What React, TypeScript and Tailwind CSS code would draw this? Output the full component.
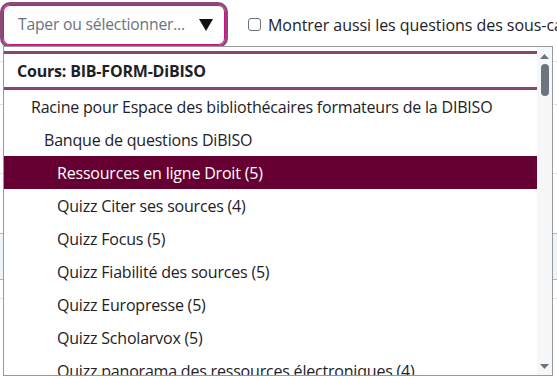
import React from 'react';

const rows = [
  { label: 'Racine pour Espace des bibliothécaires formateurs de la DIBISO', indent: 'pl-[27px]' },
  { label: 'Banque de questions DiBISO', indent: 'pl-[40px]' },
  { label: 'Ressources en ligne Droit (5)', indent: 'pl-[53px]', active: true },
  { label: 'Quizz Citer ses sources (4)', indent: 'pl-[53px]' },
  { label: 'Quizz Focus (5)', indent: 'pl-[53px]' },
  { label: 'Quizz Fiabilité des sources (5)', indent: 'pl-[53px]' },
  { label: 'Quizz Europresse (5)', indent: 'pl-[53px]' },
  { label: 'Quizz Scholarvox (5)', indent: 'pl-[53px]' },
  { label: 'Quizz panorama des ressources électroniques (4)', indent: 'pl-[53px]' },
];

export default function App() {
  return (
    <div
      className="relative w-[557px] h-[378px] overflow-hidden bg-white text-[#1d2125]"
      style={{ fontFamily: '"Open Sans", "Noto Sans", sans-serif' }}
    >
      {/* top controls */}
      <div className="flex items-center h-[50px] pt-[3px] pb-[4px]">
        <div className="shrink-0 ml-[3px] w-[222px] h-[40px] rounded-[7px] border border-[#d10f84] shadow-[0_0_0_3px_#8c4a77] flex items-center pl-[14px] pr-[11px]">
          <span className="flex-1 whitespace-nowrap text-[15.7px] text-[#6a737b] tracking-[-0.2px]">Taper ou sélectionner...</span>
          <svg width="14" height="12" viewBox="0 0 14 12">
            <path d="M0 0 H14 L7 12 Z" fill="#111" />
          </svg>
        </div>
        <div className="shrink-0 ml-[23px] flex items-center gap-[7px] whitespace-nowrap">
          <span className="w-[13px] h-[13px] rounded-[3px] border border-[#6a737b] bg-white" />
          <span className="text-[16px] tracking-[-0.05px]">Montrer aussi les questions des sous-catégories</span>
        </div>
      </div>

      {/* page content behind the popup */}
      <div className="flex flex-col">
        <div className="h-[12px] border-b border-[#dee2e6]" />
        <div className="h-[43px] border-b border-[#dee2e6]" />
        <div className="h-[69px] border-b border-[#dee2e6]" />
        <div className="h-[60px] border-b border-[#adb5bd]" />
        <div className="h-[46px] border-b border-[#adb5bd] bg-[#eef4fa]" />
        <div className="h-[19px] border-b border-[#dee2e6]" />
      </div>

      {/* dropdown popup */}
      <div className="absolute left-[3px] top-[46px] w-[550px] h-[330px] border border-[#999] bg-white flex">
        <div className="flex-1 overflow-hidden pt-[4px] text-[16px] tracking-[-0.2px]">
          <div className="h-[39px] border-y-[3px] border-[#8c4570] flex items-center pl-[13px] font-bold">
            Cours: BIB-FORM-DiBISO
          </div>
          {rows.map((r) => (
            <div
              key={r.label}
              className={`h-[33px] flex items-center whitespace-nowrap ${r.indent} ${
                r.active ? 'bg-[#660033] text-white' : ''
              }`}
            >
              {r.label}
            </div>
          ))}
        </div>
        <div className="w-[15px] bg-[#f6f7f9] flex flex-col items-center">
          <svg width="9" height="5" viewBox="0 0 9 5" className="mt-[7px]">
            <path d="M0 5 L4.5 0 L9 5 Z" fill="#6c757d" />
          </svg>
          <div className="mt-[5px] w-[8px] h-[32px] rounded-full bg-[#6c757d]" />
          <div className="flex-1" />
          <svg width="9" height="5" viewBox="0 0 9 5" className="mb-[6px]">
            <path d="M0 0 L9 0 L4.5 5 Z" fill="#6c757d" />
          </svg>
        </div>
      </div>
    </div>
  );
}
